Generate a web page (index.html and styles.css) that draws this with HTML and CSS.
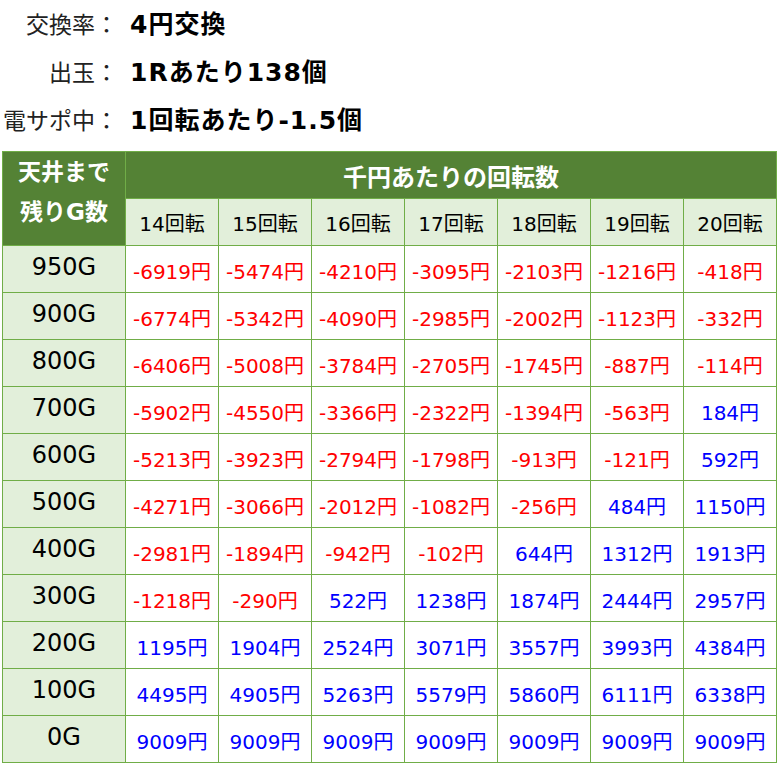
FILE: index.html
```html
<!DOCTYPE html>
<html lang="ja">
<head>
<meta charset="utf-8">
<title>天井期待値</title>
<link rel="stylesheet" href="styles.css">
</head>
<body>
<div class="page">
  <dl class="info">
    <dt>交換率：</dt><dd>4円交換</dd>
    <dt>出玉：</dt><dd>1Rあたり138個</dd>
    <dt>電サポ中：</dt><dd>1回転あたり-1.5個</dd>
  </dl>
  <div class="grid">
    <div class="corner">天井まで<br>残りG数</div>
    <div class="top">千円あたりの回転数</div>
    <div class="sub">14回転</div><div class="sub">15回転</div><div class="sub">16回転</div><div class="sub">17回転</div><div class="sub">18回転</div><div class="sub">19回転</div><div class="sub">20回転</div>

    <div class="rh">950G</div><div class="c neg">-6919円</div><div class="c neg">-5474円</div><div class="c neg">-4210円</div><div class="c neg">-3095円</div><div class="c neg">-2103円</div><div class="c neg">-1216円</div><div class="c neg">-418円</div>
    <div class="rh">900G</div><div class="c neg">-6774円</div><div class="c neg">-5342円</div><div class="c neg">-4090円</div><div class="c neg">-2985円</div><div class="c neg">-2002円</div><div class="c neg">-1123円</div><div class="c neg">-332円</div>
    <div class="rh">800G</div><div class="c neg">-6406円</div><div class="c neg">-5008円</div><div class="c neg">-3784円</div><div class="c neg">-2705円</div><div class="c neg">-1745円</div><div class="c neg">-887円</div><div class="c neg">-114円</div>
    <div class="rh">700G</div><div class="c neg">-5902円</div><div class="c neg">-4550円</div><div class="c neg">-3366円</div><div class="c neg">-2322円</div><div class="c neg">-1394円</div><div class="c neg">-563円</div><div class="c pos">184円</div>
    <div class="rh">600G</div><div class="c neg">-5213円</div><div class="c neg">-3923円</div><div class="c neg">-2794円</div><div class="c neg">-1798円</div><div class="c neg">-913円</div><div class="c neg">-121円</div><div class="c pos">592円</div>
    <div class="rh">500G</div><div class="c neg">-4271円</div><div class="c neg">-3066円</div><div class="c neg">-2012円</div><div class="c neg">-1082円</div><div class="c neg">-256円</div><div class="c pos">484円</div><div class="c pos">1150円</div>
    <div class="rh">400G</div><div class="c neg">-2981円</div><div class="c neg">-1894円</div><div class="c neg">-942円</div><div class="c neg">-102円</div><div class="c pos">644円</div><div class="c pos">1312円</div><div class="c pos">1913円</div>
    <div class="rh">300G</div><div class="c neg">-1218円</div><div class="c neg">-290円</div><div class="c pos">522円</div><div class="c pos">1238円</div><div class="c pos">1874円</div><div class="c pos">2444円</div><div class="c pos">2957円</div>
    <div class="rh">200G</div><div class="c pos">1195円</div><div class="c pos">1904円</div><div class="c pos">2524円</div><div class="c pos">3071円</div><div class="c pos">3557円</div><div class="c pos">3993円</div><div class="c pos">4384円</div>
    <div class="rh">100G</div><div class="c pos">4495円</div><div class="c pos">4905円</div><div class="c pos">5263円</div><div class="c pos">5579円</div><div class="c pos">5860円</div><div class="c pos">6111円</div><div class="c pos">6338円</div>
    <div class="rh">0G</div><div class="c pos">9009円</div><div class="c pos">9009円</div><div class="c pos">9009円</div><div class="c pos">9009円</div><div class="c pos">9009円</div><div class="c pos">9009円</div><div class="c pos">9009円</div>
  </div>
</div>
</body>
</html>
```

FILE: styles.css
```css
html, body {
  margin: 0;
  padding: 0;
  background: #ffffff;
}

body {
  font-family: "DejaVu Sans", "Noto Sans CJK JP", sans-serif;
  color: #000;
}

.page {
  padding: 1px 0 0 2px;
}

.info {
  display: grid;
  grid-template-columns: 116px auto;
  column-gap: 12px;
  margin: 0;
}

.info dt {
  text-align: right;
  font-size: 23px;
  line-height: 48px;
  height: 48px;
  color: #222;
  white-space: nowrap;
}

.info dd {
  margin: 0;
  font-size: 25px;
  font-weight: bold;
  line-height: 48px;
  height: 48px;
  letter-spacing: 1px;
  white-space: nowrap;
}

.grid {
  margin-top: 6px;
  width: 775px;
  box-sizing: border-box;
  display: grid;
  grid-template-columns: 122px repeat(7, 92px);
  grid-template-rows: 46px 46px repeat(11, 46px);
  gap: 1px;
  padding: 1px;
  background: #70ad47;
}

.grid > div {
  display: flex;
  align-items: center;
  justify-content: center;
  white-space: nowrap;
}

.corner {
  grid-row: 1 / span 2;
  background: #548235;
  color: #fff;
  font-weight: bold;
  font-size: 23px;
  line-height: 40px;
  text-align: center;
  align-items: flex-start !important;
}

.top {
  grid-column: 2 / span 7;
  background: #548235;
  color: #fff;
  font-weight: bold;
  font-size: 24px;
}

.sub {
  background: #e2efda;
  font-size: 20px;
}

.rh {
  background: #e2efda;
  font-size: 24px;
  padding-bottom: 4px;
  box-sizing: border-box;
}

.c {
  background: #fff;
  font-size: 20px;
  padding-top: 2px;
  box-sizing: border-box;
}

.neg { color: #ff0000; }
.pos { color: #0000ff; }
```
